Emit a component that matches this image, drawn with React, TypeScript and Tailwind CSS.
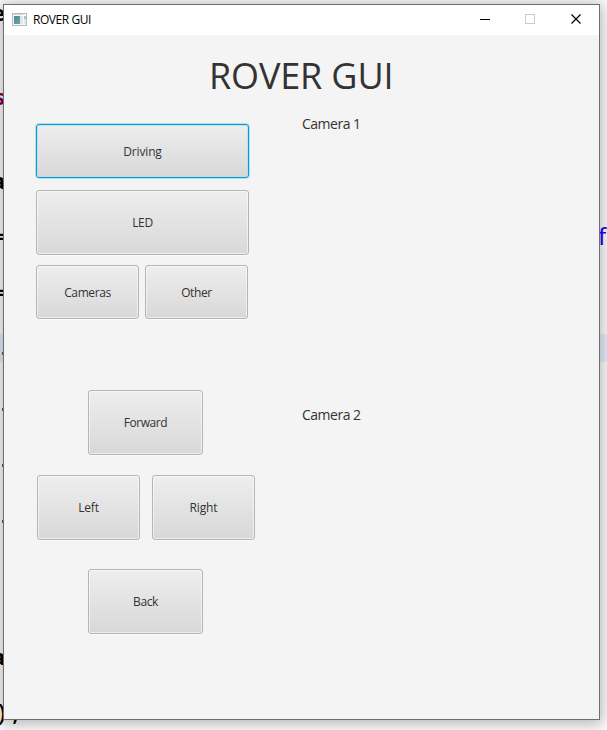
import React from "react";

type EditorLine = { text?: string; tone?: string; right?: string; active?: boolean };

const editorLines: EditorLine[] = Array.from({ length: 27 }, () => ({}));
editorLines[0] = { text: "e", tone: "text-black -ml-[8px] font-bold" };
editorLines[3] = { text: "s", tone: "text-[#7f0055] -ml-[6px] font-bold" };
editorLines[6] = { text: "a", tone: "text-black -ml-[8px] font-bold" };
editorLines[8] = { text: "=", tone: "text-black -ml-[6px] -mt-[2px] font-bold", right: "f" };
editorLines[10] = { text: "=", tone: "text-black -ml-[6px] -mt-[2px] font-bold" };
editorLines[12] = { tone: "dot", active: true };
editorLines[14] = { tone: "dot" };
editorLines[16] = { tone: "dot" };
editorLines[18] = { tone: "dot" };
editorLines[23] = { text: "a", tone: "text-black -ml-[8px] font-bold" };
editorLines[25] = { text: ");", tone: "text-black -ml-[2px] tracking-[7px] text-[24px] font-medium" };

function EditorRow({ line }: { line: EditorLine }) {
  return (
    <div
      className={`flex h-7 shrink-0 items-center justify-between whitespace-pre font-['Noto_Sans',sans-serif] text-[22px] leading-7 ${
        line.active ? "bg-[#e8f2fe]" : ""
      }`}
    >
      {line.tone === "dot" ? (
        <span className="mt-[11px] ml-[2px] h-[3px] w-[2px] bg-[#8a5a10]" />
      ) : (
        <span className={line.tone}>{line.text}</span>
      )}
      {line.right && <span className="-mt-px w-[9px] text-[24px] text-[#2a00ff]">{line.right}</span>}
    </div>
  );
}

function FxButton({ label, className, focused }: { label: string; className: string; focused?: boolean }) {
  return (
    <button
      className={`flex shrink-0 items-center justify-center rounded-[3px] border bg-linear-to-b from-[#eeeeee] to-[#d8d8d8] text-xs text-[#333333] ${
        focused
          ? "border-[#039ed3] shadow-[0_0_0_1px_#b5e0ee,inset_0_0_0_1px_rgba(185,218,230,0.7)]"
          : "border-[#b5b5b5] shadow-[0_1px_0_#fafafa,inset_0_0_0_1px_rgba(255,255,255,0.55)]"
      } ${className}`}
    >
      {label}
    </button>
  );
}

function TitleBar() {
  return (
    <div className="flex h-[30px] items-center bg-white">
      <svg className="-mt-[2px] ml-2 shrink-0" width="16" height="14" viewBox="0 0 16 14" shapeRendering="crispEdges">
        <defs>
          <linearGradient id="pane" x1="0" y1="0" x2="1" y2="1">
            <stop offset="0" stopColor="#4788a0" />
            <stop offset="1" stopColor="#63b08b" />
          </linearGradient>
        </defs>
        <rect x="0" y="1" width="15" height="13" fill="#b4b9bf" />
        <rect x="1" y="2" width="13" height="11" fill="#f8f8f9" />
        <rect x="1" y="2" width="10" height="1" fill="#d4d7da" />
        <rect x="2" y="4" width="6" height="8" fill="url(#pane)" />
        <rect x="8" y="4" width="3" height="8" fill="#e6e6e6" />
        <rect x="12" y="4" width="2" height="3" fill="#9cc8bd" />
        <rect x="12" y="7" width="2" height="5" fill="#e5e8ea" />
      </svg>
      <span className="ml-[5px] text-xs tracking-[-0.45px] text-black">ROVER GUI</span>
      <svg className="-mt-[2px] mr-[14px] ml-auto" width="105" height="12" viewBox="0 0 105 12" fill="none" aria-hidden="true">
        <path d="M0 6.5h10" stroke="#000" />
        <rect x="45.5" y="1.5" width="9" height="9" stroke="#ccc" />
        <path d="M91.5 1.5l9 9m0-9l-9 9" stroke="#000" strokeWidth="1.2" />
      </svg>
    </div>
  );
}

export default function App() {
  return (
    <div className="relative h-[730px] w-[607px] overflow-hidden bg-white font-['Open_Sans','Noto_Sans',sans-serif]">
      <div className="-mt-[2px] flex h-[756px] flex-col">
        {editorLines.map((line, i) => (
          <EditorRow key={i} line={line} />
        ))}
      </div>
      <div className="absolute top-1 left-[3px] flex h-[716px] w-[597px] flex-col border border-[#6e6e6e] bg-[#f4f4f4] shadow-[0_2px_14px_3px_rgba(0,0,0,0.28)]">
        <TitleBar />
        <h1 className="mt-4 ml-[205px] h-[49px] text-[36px] leading-[50px] tracking-[-0.15px] text-[#333333]">
          ROVER GUI
        </h1>
        <div className="flex">
          <div className="ml-8 flex w-[266px] flex-col pt-6">
            <FxButton label="Driving" focused className="h-[54px] w-[213px] pt-px tracking-[-0.15px]" />
            <FxButton label="LED" className="mt-3 h-[65px] w-[213px] tracking-[-0.3px]" />
            <div className="mt-[10px] flex gap-[6px]">
              <FxButton label="Cameras" className="h-[54px] w-[103px] pt-[2px] tracking-[-0.4px]" />
              <FxButton label="Other" className="h-[54px] w-[103px] pt-[2px] tracking-[-0.4px]" />
            </div>
            <FxButton label="Forward" className="mt-[71px] ml-[52px] h-[65px] w-[115px] tracking-[-0.45px]" />
            <div className="mt-5 ml-px flex gap-3">
              <FxButton label="Left" className="h-[65px] w-[103px] tracking-[-0.2px]" />
              <FxButton label="Right" className="h-[65px] w-[103px] tracking-[-0.1px]" />
            </div>
            <FxButton label="Back" className="mt-[29px] ml-[52px] h-[65px] w-[115px] tracking-[-0.4px]" />
          </div>
          <div className="flex flex-col pt-[14px] text-sm leading-5 tracking-[-0.5px] text-[#333333]">
            <span>Camera 1</span>
            <span className="mt-[271px]">Camera 2</span>
          </div>
        </div>
      </div>
    </div>
  );
}
